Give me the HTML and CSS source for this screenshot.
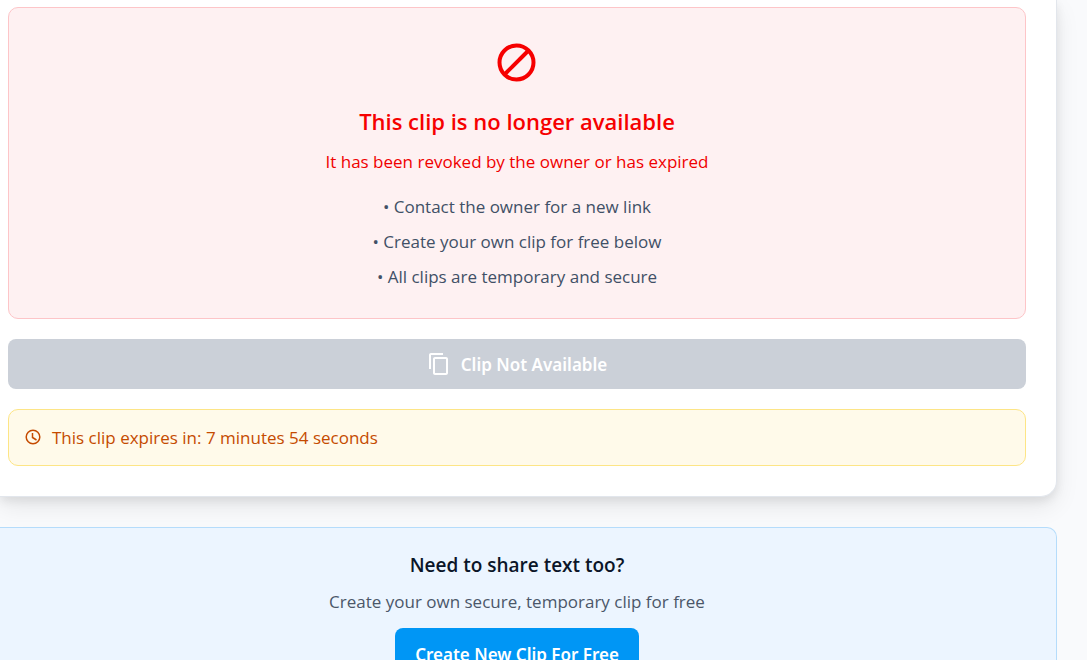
FILE: index.html
```html
<!DOCTYPE html>
<html lang="en">
<head>
<meta charset="utf-8">
<meta name="viewport" content="width=device-width, initial-scale=1">
<title>Clip not available</title>
<link rel="stylesheet" href="styles.css">
</head>
<body>
<main class="page">
  <section class="card">
    <div class="notice">
      <svg class="notice-icon" viewBox="0 0 48 48" aria-hidden="true"><circle cx="23.500" cy="24.500" r="17"/><path d="M11.500 36.500 35.500 12.500"/></svg>
      <h2 class="notice-title">This clip is no longer available</h2>
      <p class="notice-text">It has been revoked by the owner or has expired</p>
      <div class="tips">
        <p class="tip">• Contact the owner for a new link</p>
        <p class="tip">• Create your own clip for free below</p>
        <p class="tip">• All clips are temporary and secure</p>
      </div>
    </div>
    <button class="copy-button" type="button" disabled>
      <svg class="copy-icon" viewBox="0 0 24 24" aria-hidden="true"><path d="M16 1H4c-1.100 0-2 .9-2 2v14h2V3h12V1zm3 4H8c-1.100 0-2 .9-2 2v14c0 1.100.9 2 2 2h11c1.100 0 2-.9 2-2V7c0-1.100-.9-2-2-2zm0 16H8V7h11v14z"/></svg>
      <span>Clip Not Available</span>
    </button>
    <div class="expiry">
      <svg class="clock-icon" viewBox="0 0 18 18" aria-hidden="true"><circle cx="9" cy="8" r="6.800"/><path d="M8.500 4v4.500l4 2.500"/></svg>
      <span>This clip expires in: 7 minutes 54 seconds</span>
    </div>
  </section>
  <section class="promo">
    <h3 class="promo-title">Need to share text too?</h3>
    <p class="promo-text">Create your own secure, temporary clip for free</p>
    <a class="promo-link" href="#">Create New Clip For Free</a>
  </section>
</main>
</body>
</html>
```

FILE: styles.css
```css
* { box-sizing: border-box; }
body {
  margin: 0;
  background: #f9fafc;
  font-family: "Open Sans", "Noto Sans", sans-serif;
  font-size: 17px;
  line-height: 25px;
  font-weight: 400;
}
h2, h3, p { margin: 0; }
.page {
  display: flex;
  flex-direction: column;
  gap: 30px;
  height: 100vh;
  padding-right: 30px;
  overflow: hidden;
}
.card {
  flex: none;
  display: flex;
  flex-direction: column;
  gap: 20px;
  padding: 7px 30px 30px 8px;
  background: #fff;
  border: solid #e2e6ec;
  border-width: 0 1px 1px 0;
  border-radius: 0 0 16px 0;
  box-shadow: 0 10px 25px rgba(0, 0, 0, 0.08), 0 4px 10px rgba(0, 0, 0, 0.08);
}
.notice {
  display: flex;
  flex-direction: column;
  align-items: center;
  padding: 30px 20px 29px;
  background: #fef1f2;
  border: 1px solid #fdc5c8;
  border-radius: 10px;
  text-align: center;
}
.notice-icon {
  width: 48px;
  height: 48px;
  fill: none;
  stroke: #f60000;
  stroke-width: 4;
}
.notice-title {
  margin-top: 20px;
  color: #f60000;
  font-size: 22px;
  line-height: 30px;
  font-weight: 600;
}
.notice-text { margin-top: 13px; color: #f00000; }
.tips {
  display: flex;
  flex-direction: column;
  gap: 10px;
  margin-top: 20px;
  color: #415066;
}
.copy-button {
  display: flex;
  align-items: center;
  justify-content: center;
  gap: 10px;
  height: 50px;
  padding: 0 20px;
  border: 0;
  border-radius: 8px;
  background: #cbd0d8;
  color: #fff;
  font: 600 17px/25px "Noto Sans", "Open Sans", sans-serif;
}
.copy-icon { width: 24px; height: 24px; fill: #fff; }
.expiry {
  display: flex;
  align-items: center;
  gap: 10px;
  padding: 15px;
  background: #fffaea;
  border: 1px solid #fde586;
  border-radius: 10px;
  color: #c54b00;
}
.clock-icon {
  width: 18px;
  height: 18px;
  fill: none;
  stroke: #c54b00;
  stroke-width: 1.5;
}
.promo {
  flex: none;
  display: flex;
  flex-direction: column;
  align-items: center;
  padding: 24px 30px 24px 8px;
  background: #ecf5ff;
  border: solid #b5dcfb;
  border-width: 1px 1px 1px 0;
  border-radius: 0 10px 10px 0;
  text-align: center;
}
.promo-title {
  color: #0b1528;
  font-size: 19px;
  line-height: 27px;
  font-weight: 600;
}
.promo-text { margin-top: 10px; color: #4b5769; }
.promo-link {
  margin-top: 14px;
  padding: 14px 20px;
  border-radius: 8px;
  background: #0096f5;
  color: #fff;
  font-family: "Noto Sans", "Open Sans", sans-serif;
  font-weight: 600;
  text-decoration: none;
}
```
